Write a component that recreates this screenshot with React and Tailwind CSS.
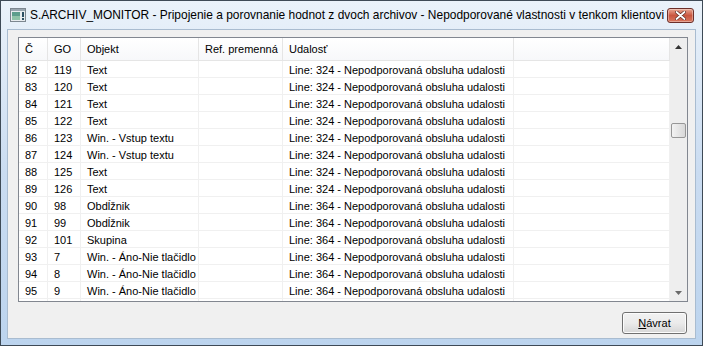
import React from 'react';

const L324 = 'Line: 324 - Nepodporovaná obsluha udalosti';
const L364 = 'Line: 364 - Nepodporovaná obsluha udalosti';

const rows = [
  ['82', '119', 'Text', L324],
  ['83', '120', 'Text', L324],
  ['84', '121', 'Text', L324],
  ['85', '122', 'Text', L324],
  ['86', '123', 'Win. - Vstup textu', L324],
  ['87', '124', 'Win. - Vstup textu', L324],
  ['88', '125', 'Text', L324],
  ['89', '126', 'Text', L324],
  ['90', '98', 'Obdĺžnik', L364],
  ['91', '99', 'Obdĺžnik', L364],
  ['92', '101', 'Skupina', L364],
  ['93', '7', 'Win. - Áno-Nie tlačidlo', L364],
  ['94', '8', 'Win. - Áno-Nie tlačidlo', L364],
  ['95', '9', 'Win. - Áno-Nie tlačidlo', L364],
  ['', '', '', ''],
];

// column widths, the last one fills up to the scrollbar
const cols = ['w-[29px]', 'w-[33px]', 'w-[118px]', 'w-[84px]', 'w-[231px]', 'flex-1'];
const headers = ['Č', 'GO', 'Objekt', 'Ref. premenná', 'Udalosť', ''];

function AppIcon() {
  return (
    <svg width="16" height="14" viewBox="0 0 16 14">
      <rect x="0.5" y="0.5" width="15" height="13" fill="#e8ecef" stroke="#7d8790" />
      <rect x="1" y="1" width="14" height="2" fill="#9aa6b0" />
      <rect x="2" y="4" width="8" height="8" fill="#5d9e8c" />
      <rect x="2" y="8" width="8" height="4" fill="#8fc3a8" />
      <rect x="12" y="4" width="2" height="5" fill="#2c4f63" />
      <rect x="12" y="10" width="2" height="2" fill="#2c4f63" />
    </svg>
  );
}

function CloseButton() {
  return (
    <div className="w-[27px] h-[15px] rounded-[3px] border border-[#6b2f2a] bg-gradient-to-b from-[#e8a793] via-[#c9563f] to-[#d9775e] flex items-center justify-center shadow-[inset_0_0_0_1px_rgba(255,255,255,0.35)]">
      <svg width="11" height="9" viewBox="0 0 11 9">
        <path d="M1.5 1 L9.5 8 M9.5 1 L1.5 8" stroke="#5a2a22" strokeWidth="3.2" strokeLinecap="round" />
        <path d="M1.5 1 L9.5 8 M9.5 1 L1.5 8" stroke="#ffffff" strokeWidth="1.8" strokeLinecap="round" />
      </svg>
    </div>
  );
}

function Scrollbar() {
  return (
    <div className="w-[17px] bg-[#eeeeee] flex flex-col">
      <div className="h-[17px] flex items-center justify-center">
        <svg width="7" height="4" viewBox="0 0 7 4"><path d="M0 4 L3.5 0 L7 4 Z" fill="#333" /></svg>
      </div>
      <div className="h-[68px]" />
      <div className="h-[15px] mx-[1px] rounded-[2px] border border-[#979797] bg-gradient-to-r from-[#f3f3f3] to-[#d8d8d8]" />
      <div className="flex-1" />
      <div className="h-[17px] flex items-center justify-center">
        <svg width="7" height="4" viewBox="0 0 7 4"><path d="M0 0 L7 0 L3.5 4 Z" fill="#6a6a6a" /></svg>
      </div>
    </div>
  );
}

export default function App() {
  return (
    <div
      className="w-[703px] h-[346px] border border-[#3e4a56] bg-gradient-to-b from-[#eaf2fa] via-[#cadcf1] to-[#bcd4ee] flex flex-col text-black"
      style={{ fontFamily: '"Liberation Sans", Arial, sans-serif' }}
    >
      {/* title bar */}
      <div className="h-[28px] flex items-center pl-[9px] pr-[8px] shrink-0">
        <AppIcon />
        <span className="ml-[4px] text-[11.95px] leading-[16px] text-black whitespace-nowrap flex-1">
          S.ARCHIV_MONITOR - Pripojenie a porovnanie hodnot z dvoch archivov - Nepodporované vlastnosti v tenkom klientovi
        </span>
        <CloseButton />
      </div>

      {/* client area */}
      <div className="mx-[6px] mb-[6px] flex-1 bg-[#f0f0f0] border border-[#a9bcd0] flex flex-col text-[11px]">
        <div className="ml-[10px] mr-[7px] mt-[7px] h-[265px] border border-[#828790] bg-white flex">
          <div className="flex-1 flex flex-col overflow-hidden">
            <div className="h-[23px] flex shrink-0 border-b border-[#e5e5e5] bg-gradient-to-b from-white to-[#f7f8fa]">
              {headers.map((h, i) => (
                <div key={i} className={`${cols[i]} shrink-0 pl-[6px] flex items-center border-r border-[#e5e5e5] whitespace-nowrap`}>
                  {h}
                </div>
              ))}
            </div>
            {rows.map((r, ri) => (
              <div key={ri} className="h-[17px] flex shrink-0 border-b border-[#f0f0f0]">
                {[r[0], r[1], r[2], '', r[3], ''].map((c, i) => (
                  <div key={i} className={`${cols[i]} shrink-0 pl-[6px] pt-[3px] flex items-center border-r border-[#f0f0f0] whitespace-nowrap overflow-hidden`}>
                    {c}
                  </div>
                ))}
              </div>
            ))}
          </div>
          <Scrollbar />
        </div>
        <div className="flex justify-end mt-[10px] mr-[8px]">
          <button className="w-[65px] h-[22px] rounded-[3px] border border-[#707070] bg-gradient-to-b from-[#f2f2f2] via-[#ebebeb] to-[#d6d6d6] text-[11px] shadow-[inset_0_0_0_1px_#fcfcfc]">
            <span className="underline underline-offset-1">N</span>ávrat
          </button>
        </div>
      </div>
    </div>
  );
}
